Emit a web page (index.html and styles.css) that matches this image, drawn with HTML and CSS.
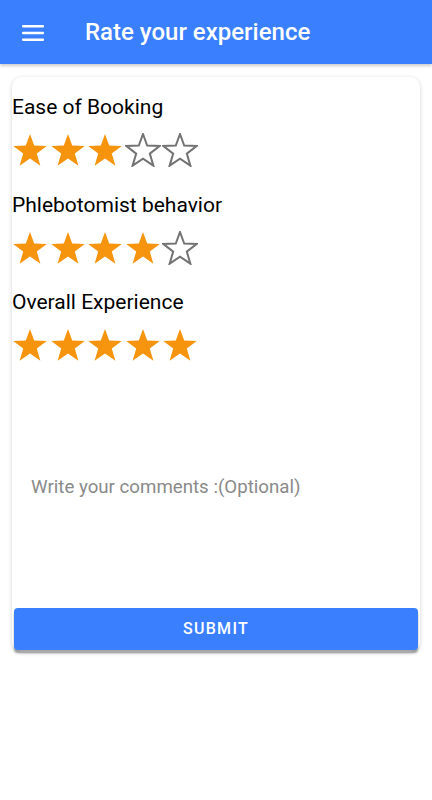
FILE: index.html
```html
<!DOCTYPE html>
<html lang="en">
<head>
    <meta charset="UTF-8">
    <meta name="viewport" content="width=device-width, initial-scale=1.0">
    <title>Rate your experience</title>
    <link rel="stylesheet" href="styles.css">
</head>
<body>
    <header class="app-bar">
        <svg class="menu-icon" width="22" height="16" viewBox="0 0 22 16">
            <rect x="0" y="0" width="22" height="2.6" rx="1" fill="#fff"/>
            <rect x="0" y="6.7" width="22" height="2.6" rx="1" fill="#fff"/>
            <rect x="0" y="13.4" width="22" height="2.6" rx="1" fill="#fff"/>
        </svg>
        <h1 class="title">Rate your experience</h1>
    </header>

    <main class="content">
        <div class="card">
            <div class="rating">
                <div class="rating-label">Ease of Booking</div>
                <div class="stars" data-value="3"></div>
            </div>
            <div class="rating">
                <div class="rating-label">Phlebotomist behavior</div>
                <div class="stars" data-value="4"></div>
            </div>
            <div class="rating">
                <div class="rating-label">Overall Experience</div>
                <div class="stars" data-value="5"></div>
            </div>

            <div class="comments">
                <span class="placeholder">Write your comments :(Optional)</span>
            </div>

            <button class="submit">SUBMIT</button>
        </div>
    </main>

    <script>
        // draw the stars for each rating row
        const starPoints = '18,1 22.2,12.6 34.8,12.9 24.8,20.6 28.4,32.7 18,25.6 7.6,32.7 11.2,20.6 1.2,12.9 13.8,12.6';

        document.querySelectorAll('.stars').forEach(row => {
            const value = parseInt(row.dataset.value);
            for (let i = 0; i < 5; i++) {
                const filled = i < value;
                row.insertAdjacentHTML('beforeend',
                    `<svg class="star" width="36" height="34" viewBox="0 0 36 34">
                        <polygon points="${starPoints}" ${filled
                            ? 'fill="#f7940d"'
                            : 'fill="none" stroke="#737373" stroke-width="2"'}/>
                    </svg>`);
            }
        });
    </script>
</body>
</html>
```

FILE: styles.css
```css
body {
    margin: 0;
    font-family: Roboto, "Noto Sans", sans-serif;
    background-color: #fff;
}
.app-bar {
    height: 64px;
    background-color: #3a7ffd;
    display: flex;
    align-items: center;
    padding-left: 22px;
    box-shadow: 0 2px 3px rgba(0, 0, 0, 0.2);
}
.menu-icon {
    margin-top: 1px;
}
.title {
    margin: 0 0 0 41px;
    color: #fff;
    font-size: 24px;
    font-weight: 500;
}
.content {
    padding: 13px 12px;
}
.card {
    background-color: #fff;
    border-radius: 10px;
    box-shadow: 0 1px 4px rgba(0, 0, 0, 0.18);
    padding-top: 18px;
    display: flex;
    flex-direction: column;
}
.rating {
    margin-bottom: 25.5px;
}
.rating-label {
    font-size: 21px;
    line-height: 24px;
    color: #000;
}
.stars {
    display: flex;
    gap: 1.5px;
    margin-top: 14px;
}
.star {
    display: block;
}
.comments {
    box-sizing: border-box;
    height: 220px;
    padding: 0 0 22px 19px;
    display: flex;
    align-items: center;
}
.placeholder {
    font-size: 18.7px;
    color: #8a8a8a;
}
.submit {
    margin: 0 2px 2px;
    height: 42px;
    border: none;
    border-radius: 4px;
    background-color: #3a7ffd;
    color: #fff;
    font-family: Roboto, sans-serif;
    font-size: 16px;
    font-weight: 500;
    letter-spacing: 1.3px;
    box-shadow: 0 3px 2px rgba(0, 0, 0, 0.35);
}
```
